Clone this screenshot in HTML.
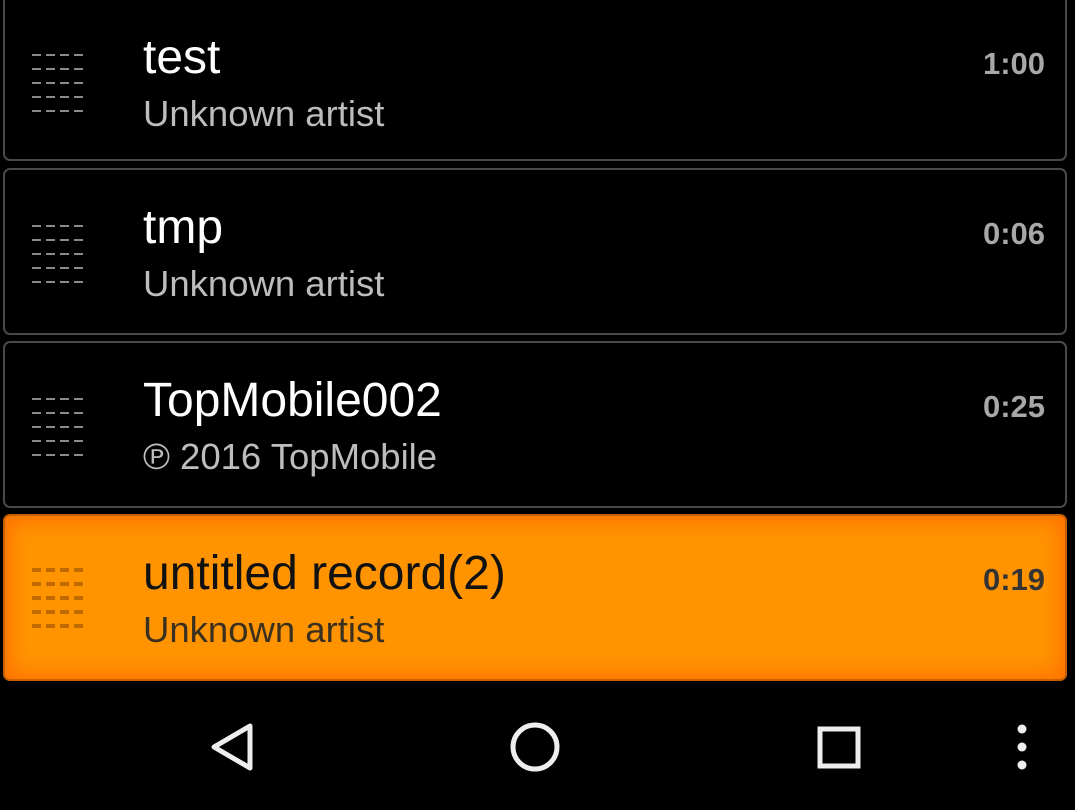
<!DOCTYPE html>
<html><head><meta charset="utf-8"><style>
body{margin:0;width:1075px;height:810px;background:#000;overflow:hidden;position:relative;font-family:"Liberation Sans",Arial,sans-serif}
.card{position:absolute;left:3px;width:1060px;height:163px;border:2px solid #4a4a4a;border-radius:7px;background:#000;box-sizing:content-box}
.card.sel{border-color:#c86000;background:#ff9400;box-shadow:inset 0 0 20px 5px #ff7000}
.t{position:absolute;left:138px;top:34px;font-size:48px;color:#fff;line-height:1;white-space:nowrap}
.s{position:absolute;left:138px;top:96px;font-size:36.5px;color:#bdbdbd;line-height:1;white-space:nowrap}
.d{position:absolute;right:20px;top:48px;font-size:31px;font-weight:bold;color:#a8a8a8;line-height:1}
.sel .t{color:#111}.sel .s{color:#3a3020}.sel .d{color:#333}
.g{position:absolute;left:27px;top:46px;width:54px;height:59px;
background:repeating-linear-gradient(90deg,#8a8a8a 0 9px,transparent 9px 14px);
-webkit-mask:repeating-linear-gradient(180deg,#000 0 2px,transparent 2px 14px);mask:repeating-linear-gradient(180deg,#000 0 2px,transparent 2px 14px)}
.sel .g{height:61px;background:repeating-linear-gradient(90deg,#c06a00 0 9px,transparent 9px 14px);-webkit-mask:repeating-linear-gradient(180deg,#000 0 4px,transparent 4px 14px);mask:repeating-linear-gradient(180deg,#000 0 4px,transparent 4px 14px)}
</style></head><body>
<div class="card" style="top:-6px"><div class="g" style="top:58px"></div><div class="t" style="top:38px">test</div><div class="s" style="top:100px">Unknown artist</div><div class="d" style="top:52px">1:00</div></div>
<div class="card" style="top:168px"><div class="g" style="top:55px"></div><div class="t">tmp</div><div class="s">Unknown artist</div><div class="d">0:06</div></div>
<div class="card" style="top:341px"><div class="g" style="top:55px"></div><div class="t">TopMobile002</div><div class="s">℗ 2016 TopMobile</div><div class="d">0:25</div></div>
<div class="card sel" style="top:514px"><div class="g" style="top:52px"></div><div class="t">untitled record(2)</div><div class="s">Unknown artist</div><div class="d">0:19</div></div>
<svg style="position:absolute;left:0;top:690px" width="1075" height="120">
<path d="M250 36 L250 78 L214 57 Z" fill="none" stroke="#eee" stroke-width="5" stroke-linejoin="round"/>
<circle cx="535" cy="57" r="22" fill="none" stroke="#eee" stroke-width="5"/>
<rect x="820" y="39" width="38" height="37" fill="none" stroke="#eee" stroke-width="5"/>
<circle cx="1022" cy="39" r="4.5" fill="#eee"/><circle cx="1022" cy="57" r="4.5" fill="#eee"/><circle cx="1022" cy="75" r="4.5" fill="#eee"/>
</svg>
</body></html>
